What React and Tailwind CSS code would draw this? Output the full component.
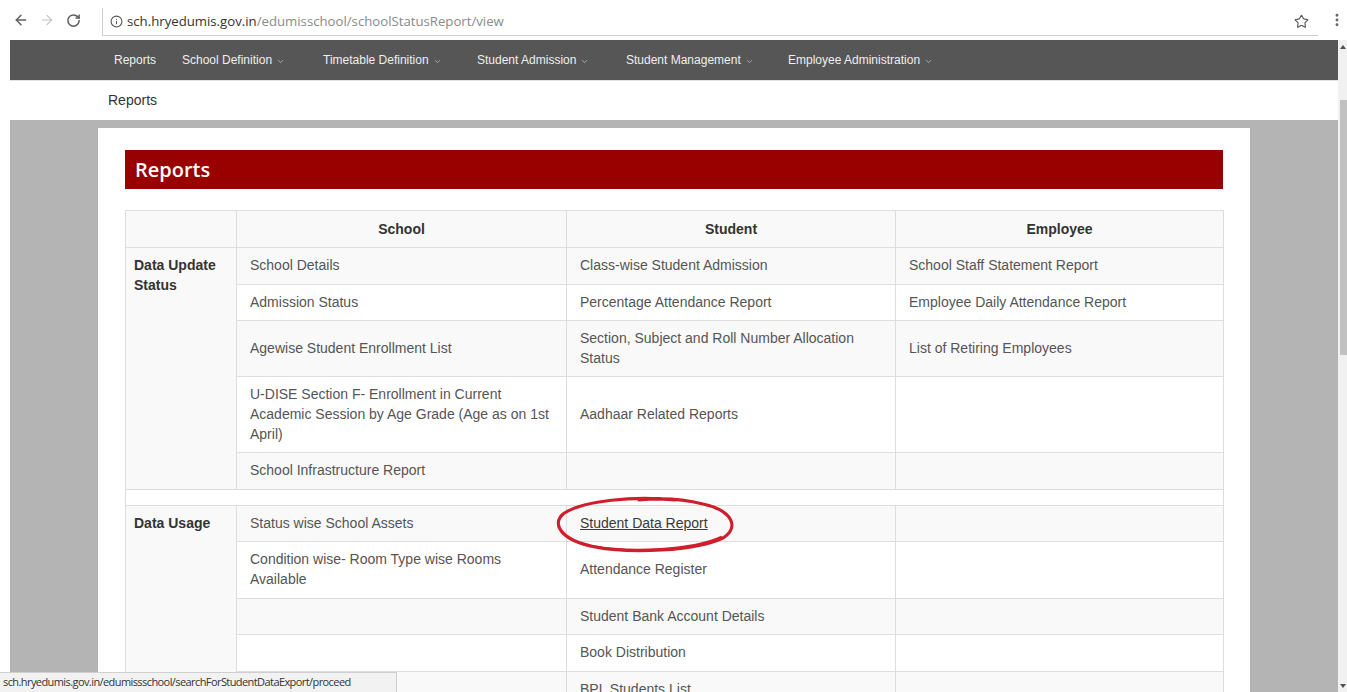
import React from "react";
import { ArrowLeft, ArrowRight, RotateCw, Info, Star, EllipsisVertical, ChevronDown } from "lucide-react";

const navItems = [
  { label: "Reports", w: "w-[68px]", caret: false },
  { label: "School Definition", w: "w-[141px]", caret: true },
  { label: "Timetable Definition", w: "w-[154px]", caret: true },
  { label: "Student Admission", w: "w-[149px]", caret: true },
  { label: "Student Management", w: "w-[162px]", caret: true },
  { label: "Employee Administration", w: "w-auto", caret: true },
];

const updateRows = [
  ["School Details", "Class-wise Student Admission", "School Staff Statement Report"],
  ["Admission Status", "Percentage Attendance Report", "Employee Daily Attendance Report"],
  ["Agewise Student Enrollment List", "Section, Subject and Roll Number Allocation Status", "List of Retiring Employees"],
  ["U-DISE Section F- Enrollment in Current Academic Session by Age Grade (Age as on 1st April)", "Aadhaar Related Reports", ""],
  ["School Infrastructure Report", "", ""],
];

const usageRows = [
  ["Status wise School Assets", "__link__", ""],
  ["Condition wise- Room Type wise Rooms Available", "Attendance Register", ""],
  ["", "Student Bank Account Details", ""],
  ["", "Book Distribution", ""],
  ["", "BPL Students List", ""],
];

function Cell({ children }) {
  return (
    <td className="border border-[#dddddd] pl-[13px] pr-[8px] py-[8px] align-middle text-[14px] leading-[19.6px] text-[#555555]">
      {children}
    </td>
  );
}

function GroupLabel({ label, span }) {
  return (
    <td
      rowSpan={span}
      className="border border-[#dddddd] pl-[8px] pr-[4px] py-[8px] align-top text-[14px] leading-[19.6px] font-bold text-[#333333]"
    >
      {label}
    </td>
  );
}

// Hand-drawn marker loop around the highlighted link
function MarkerLoop() {
  return (
    <svg
      className="absolute left-[-27px] top-[-19px] pointer-events-none"
      width="184"
      height="60"
      viewBox="0 0 184 60"
      fill="none"
    >
      <path
        d="M122 5 C82 1, 30 5, 10 19 C-1 29, 7 45, 42 52 C78 59, 142 56, 170 43 C186 33, 181 16, 150 9 C130 4, 106 3, 86 5"
        stroke="#cf1f2c"
        strokeWidth="3.2"
        strokeLinecap="round"
      />
      <path
        d="M40 51 C78 58, 140 55, 168 42"
        stroke="#cf1f2c"
        strokeWidth="2"
        strokeLinecap="round"
      />
    </svg>
  );
}

function StudentDataLink() {
  return (
    <span className="relative inline-block">
      <span className="underline text-[#3a3a3a]">Student Data Report</span>
      <MarkerLoop />
    </span>
  );
}

function ReportsTable() {
  return (
    <table className="w-[1098px] table-fixed border-collapse border border-[#dddddd] font-['Liberation_Sans',Arial,sans-serif]">
      <colgroup>
        <col className="w-[111px]" />
        <col className="w-[330px]" />
        <col className="w-[329px]" />
        <col className="w-[328px]" />
      </colgroup>
      <thead>
        <tr className="bg-[#f9f9f9]">
          <th className="border border-[#dddddd] py-[8px]"></th>
          <th className="border border-[#dddddd] py-[8px] text-center text-[14px] leading-[20px] font-bold text-[#333333]">School</th>
          <th className="border border-[#dddddd] py-[8px] text-center text-[14px] leading-[20px] font-bold text-[#333333]">Student</th>
          <th className="border border-[#dddddd] py-[8px] text-center text-[14px] leading-[20px] font-bold text-[#333333]">Employee</th>
        </tr>
      </thead>
      <tbody>
        {updateRows.map((r, i) => (
          <tr key={"u" + i} className={i % 2 === 0 ? "bg-[#f9f9f9]" : "bg-white"}>
            {i === 0 && <GroupLabel label="Data Update Status" span={updateRows.length} />}
            <Cell>{r[0]}</Cell>
            <Cell>{r[1]}</Cell>
            <Cell>{r[2]}</Cell>
          </tr>
        ))}
        <tr className="bg-white">
          <td colSpan={4} className="p-0 border-x border-[#dddddd]">
            <div className="h-[15px]"></div>
          </td>
        </tr>
        {usageRows.map((r, i) => (
          <tr key={"d" + i} className={i % 2 === 0 ? "bg-[#f9f9f9]" : "bg-white"}>
            {i === 0 && <GroupLabel label="Data Usage" span={usageRows.length} />}
            <Cell>{r[0]}</Cell>
            <Cell>{r[1] === "__link__" ? <StudentDataLink /> : r[1]}</Cell>
            <Cell>{r[2]}</Cell>
          </tr>
        ))}
      </tbody>
    </table>
  );
}

export default function App() {
  return (
    <div className="relative w-[1347px] h-[692px] overflow-hidden bg-white font-['Liberation_Sans',Arial,sans-serif]">
      {/* browser toolbar */}
      <div className="h-[40px] shrink-0 flex items-start bg-white">
        <div className="flex items-center h-[40px] pl-[13px]">
          <ArrowLeft size={16} strokeWidth={2.2} className="text-[#5f5f5f]" />
          <ArrowRight size={16} strokeWidth={1.6} className="text-[#c4c4c4] ml-[10px]" />
          <RotateCw size={15} strokeWidth={2.4} className="text-[#5f5f5f] ml-[11px]" />
        </div>
        <div className="ml-[21px] mt-[8px] w-[1216px] h-[28px] flex items-center border-l border-b border-[#cfcfcf] bg-white">
          <Info size={13} strokeWidth={2} className="text-[#555555] ml-[7px]" />
          <span className="ml-[4px] text-[13.2px] font-['Open_Sans','Noto_Sans',sans-serif] text-[#333333]">
            sch.hryedumis.gov.in<span className="text-[#8a8a8a]">/edumisschool/schoolStatusReport/view</span>
          </span>
          <div className="flex-1"></div>
          <Star size={15} strokeWidth={1.8} className="text-[#555555] mr-[9px]" />
        </div>
        <div className="flex items-center h-[40px] ml-[11px]">
          <EllipsisVertical size={16} strokeWidth={2.4} className="text-[#666666]" />
        </div>
      </div>

      <div className="flex h-[652px] overflow-hidden">
        <div className="w-[10px] shrink-0 bg-white"></div>

        {/* page viewport */}
        <div className="w-[1328px] shrink-0 flex flex-col overflow-hidden">
          <nav className="h-[40px] shrink-0 bg-[#565656] flex items-center pl-[104px] text-[12px] text-[#efefef]">
            {navItems.map((n) => (
              <div key={n.label} className={`${n.w} flex items-center whitespace-nowrap`}>
                <span>{n.label}</span>
                {n.caret && <ChevronDown size={9} strokeWidth={1.6} className="ml-[4px] mt-[2px] text-[#dcdcdc]" />}
              </div>
            ))}
          </nav>

          <div className="h-[40px] shrink-0 flex items-center pl-[98px] text-[14px] text-[#333333] border-t border-[#e2e2e2]">
            Reports
          </div>

          <div className="flex-1 min-h-0 bg-[#b4b4b4] pl-[88px] pt-[8px]">
            <div className="w-[1152px] h-full bg-white px-[27px] pt-[22px] overflow-hidden">
              <div className="h-[39px] bg-[#990000] flex items-center pl-[10px]">
                <span className="text-[20px] font-semibold text-white font-['Open_Sans','Noto_Sans',sans-serif]">Reports</span>
              </div>
              <div className="mt-[21px]">
                <ReportsTable />
              </div>
            </div>
          </div>
        </div>

        {/* vertical scrollbar */}
        <div className="w-[9px] shrink-0 bg-[#f1f1f1] flex flex-col items-center relative">
          <div className="mt-[5px] w-0 h-0 border-l-[3px] border-r-[3px] border-b-[4px] border-l-transparent border-r-transparent border-b-[#505050]"></div>
          <div className="absolute left-[2px] top-[60px] w-[7px] h-[255px] bg-[#c1c1c1]"></div>
          <div className="mt-auto mb-[4px] w-0 h-0 border-l-[3px] border-r-[3px] border-t-[4px] border-l-transparent border-r-transparent border-t-[#505050]"></div>
        </div>
      </div>

      {/* link preview status bubble */}
      <div className="absolute left-0 bottom-0 w-[397px] h-[20px] bg-[#f2f2f2] border-t border-r border-[#cfcfcf] flex items-center pl-[3px] text-[11px] text-[#333333] font-['Open_Sans','Noto_Sans',sans-serif] tracking-[-0.58px]">
        sch.hryedumis.gov.in/edumissschool/searchForStudentDataExport/proceed
      </div>
    </div>
  );
}
